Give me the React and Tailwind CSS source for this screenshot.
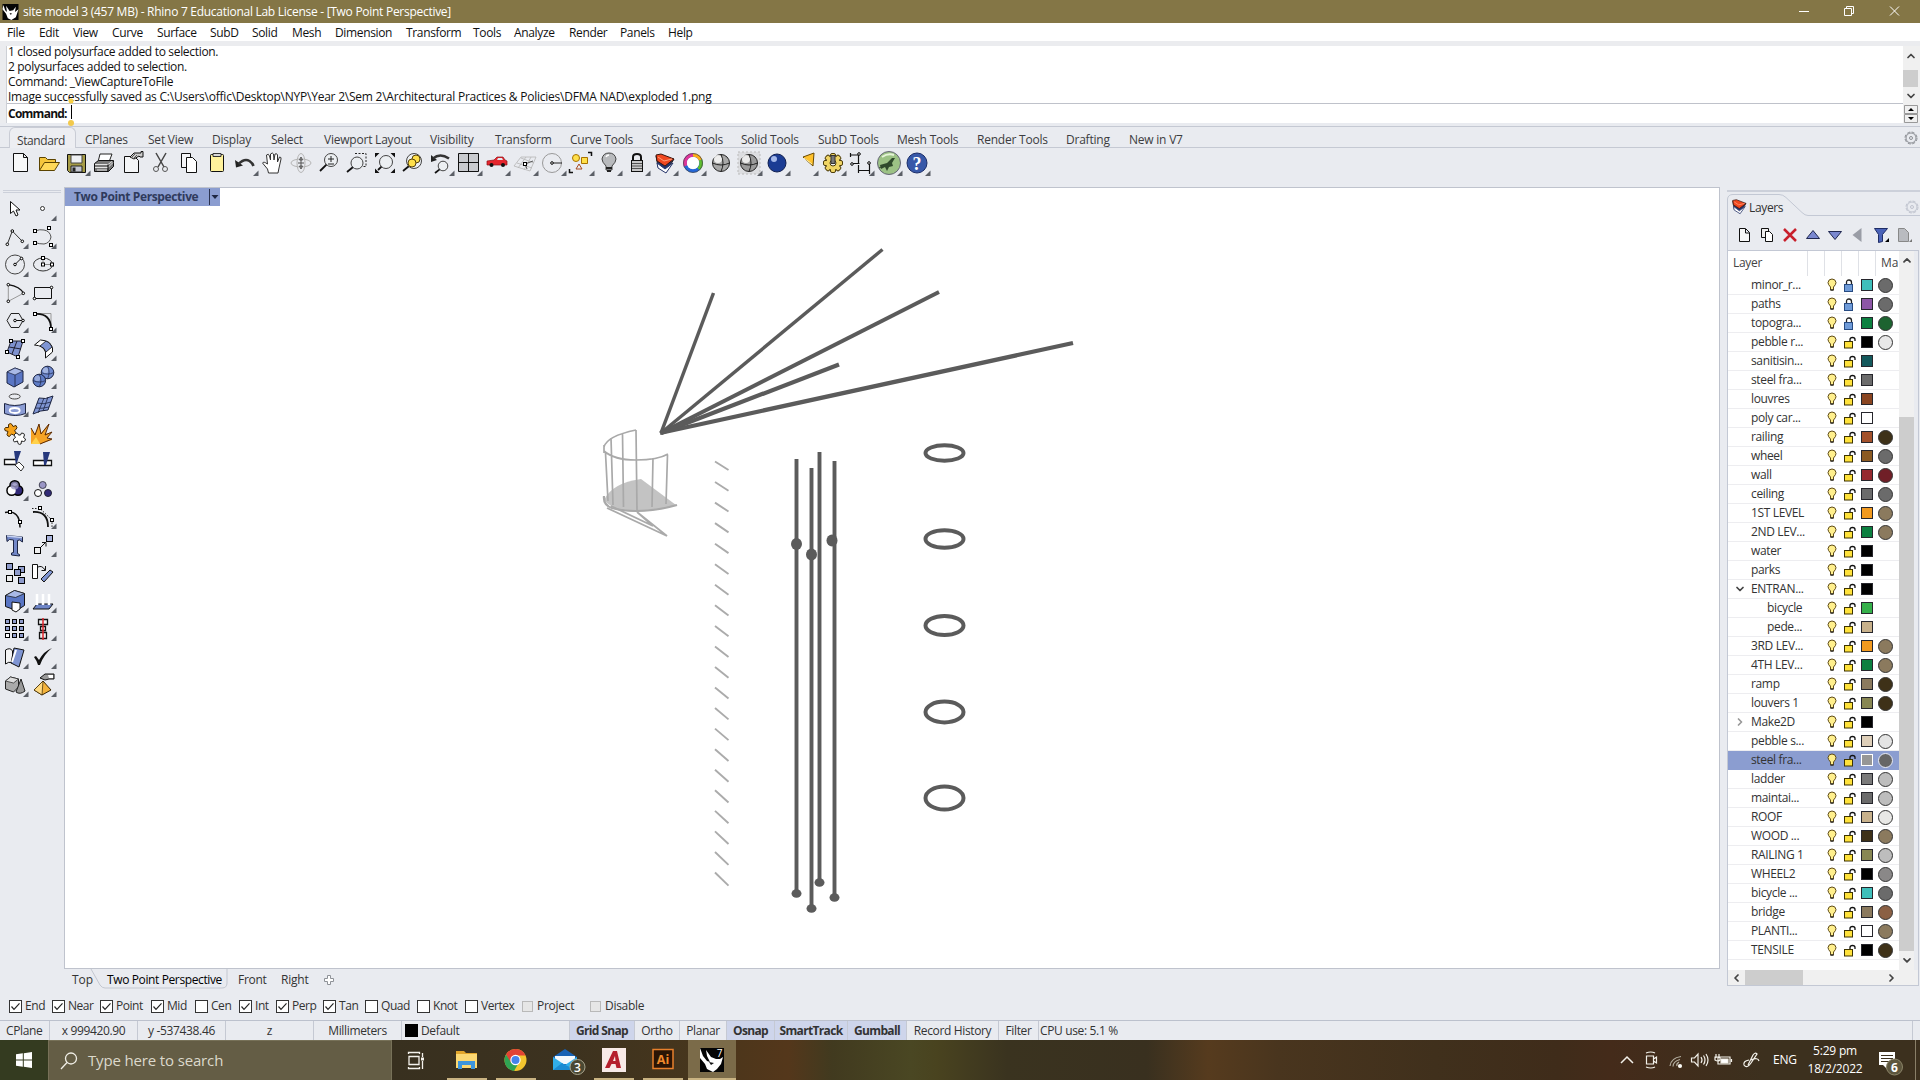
import React from 'react';
import { ChevronUp, ChevronDown, ChevronLeft, ChevronRight } from 'lucide-react';

const menus = [
  ['File', 'w-[32px]'], ['Edit', 'w-[34px]'], ['View', 'w-[39px]'], ['Curve', 'w-[45px]'], ['Surface', 'w-[53px]'],
  ['SubD', 'w-[42px]'], ['Solid', 'w-[40px]'], ['Mesh', 'w-[43px]'], ['Dimension', 'w-[71px]'], ['Transform', 'w-[67px]'],
  ['Tools', 'w-[41px]'], ['Analyze', 'w-[55px]'], ['Render', 'w-[51px]'], ['Panels', 'w-[48px]'], ['Help', 'w-[40px]'],
];

const toolTabs = [
  ['CPlanes', 'w-[63px]'], ['Set View', 'w-[64px]'], ['Display', 'w-[59px]'], ['Select', 'w-[53px]'],
  ['Viewport Layout', 'w-[106px]'], ['Visibility', 'w-[65px]'], ['Transform', 'w-[75px]'], ['Curve Tools', 'w-[81px]'],
  ['Surface Tools', 'w-[90px]'], ['Solid Tools', 'w-[77px]'], ['SubD Tools', 'w-[79px]'], ['Mesh Tools', 'w-[80px]'],
  ['Render Tools', 'w-[89px]'], ['Drafting', 'w-[63px]'], ['New in V7', 'w-[70px]'],
];

// name, lock state, layer colour, material colour, indent, arrow
const layers = [
  ['minor_r...', 'locked', '#3fbfbb', '#6b6b6b'],
  ['paths', 'locked', '#8d56a6', '#6b6b6b'],
  ['topogra...', 'locked', '#0c8040', '#1d6330'],
  ['pebble r...', 'open', '#000000', '#e8e8e8'],
  ['sanitisin...', 'open', '#14595c', null],
  ['steel fra...', 'open', '#6b6b6b', null],
  ['louvres', 'open', '#8a4521', null],
  ['poly car...', 'open', '#ffffff', null],
  ['railing', 'open', '#a3512b', '#3e3118'],
  ['wheel', 'open', '#8b5a22', '#6b6b6b'],
  ['wall', 'open', '#96292f', '#701f27'],
  ['ceiling', 'open', '#6b6b6b', '#6b6b6b'],
  ['1ST LEVEL', 'open', '#f29a1f', '#8b7a5e'],
  ['2ND LEV...', 'open', '#0c8040', '#8b7a5e'],
  ['water', 'open', '#000000', null],
  ['parks', 'open', '#000000', null],
  ['ENTRAN...', 'open', '#000000', null, false, 'down'],
  ['bicycle', 'open', '#35b04a', null, true],
  ['pede...', 'open', '#c8b18b', null, true],
  ['3RD LEV...', 'open', '#f29a1f', '#8b7a5e'],
  ['4TH LEV...', 'open', '#0c8040', '#8b7a5e'],
  ['ramp', 'open', '#8b7a5e', '#3e3118'],
  ['louvers 1', 'open', '#888753', '#3e3118'],
  ['Make2D', 'open', '#000000', null, false, 'right'],
  ['pebble s...', 'open', '#decfb9', '#e4e4e4'],
  ['steel fra...', 'open', '#969696', '#666666'],
  ['ladder', 'open', '#7a7a7a', '#bdbdbd'],
  ['maintai...', 'open', '#6b6b6b', '#bdbdbd'],
  ['ROOF', 'open', '#c8b18b', '#e8e8e6'],
  ['WOOD ...', 'open', '#3e3118', '#8b7a5e'],
  ['RAILING 1', 'open', '#888753', '#bdbdbd'],
  ['WHEEL2', 'open', '#000000', '#8a8888'],
  ['bicycle ...', 'open', '#3fbfbb', '#6b6b6b'],
  ['bridge', 'open', '#8b7a5e', '#8b6044'],
  ['PLANTI...', 'open', '#ffffff', '#8b7a5e'],
  ['TENSILE', 'open', '#000000', '#3e3118'],
];
const selectedLayer = 25;

const osnaps = [
  ['End', true, 'w-[43px]'], ['Near', true, 'w-[48px]'], ['Point', true, 'w-[51px]'], ['Mid', true, 'w-[44px]'],
  ['Cen', false, 'w-[44px]'], ['Int', true, 'w-[37px]'], ['Perp', true, 'w-[47px]'], ['Tan', true, 'w-[42px]'],
  ['Quad', false, 'w-[52px]'], ['Knot', false, 'w-[48px]'], ['Vertex', false, 'w-[57px]'],
];

const modes = [
  ['Grid Snap', true, 'w-[65px]'], ['Ortho', false, 'w-[45px]'], ['Planar', false, 'w-[47px]'], ['Osnap', true, 'w-[48px]'],
  ['SmartTrack', true, 'w-[73px]'], ['Gumball', true, 'w-[59px]'], ['Record History', false, 'w-[92px]'], ['Filter', false, 'w-[40px]'],
];

const Node = ({ x, y, s = 3, fill = '#fff' }) => (
  <rect x={x - s / 2} y={y - s / 2} width={s} height={s} fill={fill} stroke="#000" />
);

const Dot = ({ x, y }) => <circle cx={x} cy={y} r="1.3" fill="#fff" stroke="#000" />;

const Lens = ({ x = 15, y = 12, r = 6, hx = 5, hy = 22 }) => (
  <>
    <circle cx={x} cy={y} r={r} fill="#eef1f4" fillOpacity=".6" stroke="#444" />
    <path d={`M${x - r * 0.7} ${y + r * 0.7}L${hx} ${hy}`} stroke="#111" strokeWidth="1.8" />
  </>
);

const Sphere = ({ x, y, r, c = '#6f8ad0' }) => (
  <>
    <circle cx={x} cy={y} r={r} fill={c} stroke="#1c2442" />
    <circle cx={x - r * 0.3} cy={y - r * 0.35} r={r * 0.45} fill="#fff" opacity=".35" />
    <path d={`M${x - r} ${y}q${r} ${r * 0.5} ${r * 2} 0M${x} ${y - r}q${r * 0.5} ${r} 0 ${r * 2}`} stroke="#1c2442" strokeWidth=".7" />
  </>
);

const LayerStack = () => (
  <>
    <path d="M5 7l8 5 10-2-8 13-8-5z" fill="#23356e" stroke="#222" />
    <path d="M6 14l8 6 8-6-7 10-8-5z" fill="#fff" stroke="#26356b" />
    <path d="M5 6l5-1 13 5-9 7-8-5z" fill="#f0471f" stroke="#3a1610" />
    <path d="M7 8l6 4 8-2" stroke="#ff9d77" />
  </>
);

const topIcons = [
  { d: <path d="M6.500 4.500h10l4 4v14h-14zM16.500 4.500v4h4" fill="#f7f8f9" stroke="#111" /> },
  { d: <><path d="M4.500 21.500v-13h6l2 2h8v4" fill="#f5c63c" stroke="#5b4300" /><path d="M4.500 21.500l5-8h15l-5 8z" fill="#ffd959" stroke="#5b4300" /></> },
  { t: 1, d: <><path d="M4.500 5.500h18v18h-16l-2-2z" fill="#a59b46" stroke="#111" /><path d="M8 6h11v8H8z" fill="#eef0f3" stroke="#444" /><path d="M8 17h11v6H8z" fill="#c4c7d2" stroke="#222" /><path d="M9.500 18.500h3v4h-3z" fill="#222" /></> },
  { d: <><path d="M9 5h12l-3 8H7z" fill="#fff" stroke="#222" /><path d="M3.500 14.500l4-3h15v6l-5 5h-14z" fill="#777" stroke="#111" /><path d="M4 18.500h13l5-5M4 15.500h13l4-3M6 21h10" stroke="#fff" strokeWidth=".8" /><path d="M17 15.500v7" stroke="#000" /></> },
  { d: <><path d="M5.500 7.500h10l4 4v12h-14z" fill="#f4f5f7" stroke="#111" /><path d="M11 8l4-4h7V2.500h2V8h-3l-1-1-5 3z" fill="#ccc" stroke="#111" /><path d="M12 9l4-4M14 10l4-4" stroke="#555" /></> },
  { d: <><path d="M9 4l8 14M19 4l-8 14" stroke="#444" strokeWidth="1.500" /><circle cx="9" cy="20" r="2.500" stroke="#555" /><circle cx="18" cy="20" r="2.500" stroke="#555" /></> },
  { d: <><path d="M6.500 4.500h9v14h-9z" fill="#f4f5f7" stroke="#111" /><path d="M11.500 8.500h6l4 4v11h-10z" fill="#fff" stroke="#111" /></> },
  { d: <><rect x="7.500" y="5.500" width="13" height="17" rx="1" fill="#fff29c" stroke="#111" /><path d="M10 4.500h8v3h-8z" fill="#d8d8d8" stroke="#333" /></> },
  { t: 1, d: <><path d="M4 11l1 7.500 7-2z" fill="#222" /><path d="M7.500 15q6-6 11-3 3 2 4 5" stroke="#333" strokeWidth="2.600" /></> },
  { d: <path d="M9.500 24l-1-4-5-6q1-2 5 1l-1-9q2-2 3 1l1 4V5q2-2 3 0l.500 6 1-6q2-1 2.500 1v7l2-5q2 0 1.500 2l-2 9-1 5z" fill="#fff" stroke="#333" /> },
  { d: <><ellipse cx="14" cy="14" rx="10" ry="4" stroke="#b5b5b5" /><ellipse cx="14" cy="14" rx="4" ry="9.500" stroke="#b5b5b5" /><path d="M14 10v8M11 14h6M12.500 11l1.500-3 1.500 3zM12.500 17l1.500 3 1.500-3z" stroke="#555" /></> },
  { d: <><Lens x={16} y={11} r={6.500} hx={5} hy={22} /><path d="M13 10h6M16 7v6M13 15h6" stroke="#222" /></> },
  { d: <><Lens x={14} y={14} r={6} hx={4} hy={23} /><path d="M12 4.500h11v13H19" stroke="#222" strokeDasharray="2 1.500" /></> },
  { d: <><Lens x={15} y={13} r={6.500} hx={7} hy={21} /><path d="M4 4h4.500L4 8.500zM24 4h-4.500l4.500 4.500zM4 24h4.500L4 19.500zM24 24h-4.500l4.500-4.500z" fill="#111" /></> },
  { d: <><Lens x={15} y={12} r={7.500} hx={4} hy={22} /><circle cx="17" cy="10" r="4" fill="#ffe04a" stroke="#57430c" /><circle cx="13" cy="14" r="4" fill="#ffe04a" stroke="#57430c" /></> },
  { t: 1, d: <><Lens x={16} y={17} r={4.800} hx={8} hy={24} /><path d="M4 13V6l6 5z" fill="#222" /><path d="M6 9.500q7-6 16 0" stroke="#333" strokeWidth="2.500" /></> },
  { t: 1, d: <><path d="M3.500 4.500h20v18h-20z" fill="#c9cbcf" stroke="#111" /><path d="M13.500 4v19M3 13.500h21" stroke="#111" /></> },
  { t: 1, d: <><path d="M4 16v-4l7-1 3-3h6l2 3 2 1v4z" fill="#e6262e" stroke="#8d1015" strokeWidth=".7" /><path d="M15 9h4l1 2h-6z" fill="#dfe9ef" /><circle cx="8.500" cy="16" r="2" fill="#111" /><circle cx="20" cy="16" r="2" fill="#111" /></> },
  { t: 1, d: <><path d="M3 17l7-9h15l-6 14zM6 14l15 5M10 9l13 5M7 19l8-11M13 21l7-13" stroke="#b5b5b5" strokeWidth=".8" /><path d="M14 15l8-3M14 15l2 5" stroke="#555" /><Node x={14} y={15} /></> },
  { t: 1, d: <><circle cx="13" cy="14" r="9.500" stroke="#999" /><path d="M13 14h10" stroke="#222" /><Dot x={13} y={14} /></> },
  { t: 1, d: <><circle cx="9" cy="9" r="3.500" fill="#ffe04a" stroke="#a87200" /><path d="M14.500 8.500h6v6h-6z" fill="#ffe04a" stroke="#a87200" /><path d="M9 20l3-5 3 5z" stroke="#a84a20" /><path d="M21 3.500h3.500V7M2.500 20v3.500H6" stroke="#111" strokeWidth="1.500" /></> },
  { t: 1, d: <><path d="M11 17q-4-4-4-7 1-6 7-6t7 6q0 3-4 7v4h-6z" fill="#b8babd" stroke="#444" /><path d="M11 19h6M12 22h4" stroke="#222" strokeWidth="2" /><path d="M11 8q1-2 3-2" stroke="#fff" strokeWidth="1.500" /></> },
  { t: 1, d: <><path d="M10 12V8q0-3 4-3t4 3v4" stroke="#111" strokeWidth="2" /><rect x="8.500" y="11.500" width="11" height="11" fill="#c8c8c8" stroke="#111" /><path d="M9 14.500h10M9 17h10M9 19.500h10" stroke="#333" strokeWidth=".8" /></> },
  { t: 1, d: <LayerStack /> },
  { t: 1, d: <><circle cx="14" cy="14" r="8" stroke="#2367d8" strokeWidth="3.500" /><path d="M14 6a8 8 0 0 1 7.500 5" stroke="#ffae17" strokeWidth="3.500" /><path d="M21.500 11a8 8 0 0 1-2 9" stroke="#5fbf2f" strokeWidth="3.500" /><path d="M14 6a8 8 0 0 0-7.500 11" stroke="#e0359b" strokeWidth="3.500" /><circle cx="14" cy="14" r="9.500" stroke="#444" strokeWidth=".7" /><circle cx="14" cy="14" r="6" fill="#fff" /></> },
  { d: <><circle cx="14" cy="14" r="8.500" fill="#a8a8a8" stroke="#222" /><circle cx="11" cy="10" r="4" fill="#fff" opacity=".8" /><path d="M5.500 14q8.500 4 17 0M14 5.500q4 8.500 0 17" stroke="#222" /></> },
  { t: 1, d: <><path d="M3 3h22v22H3z" fill="#dcdde0" /><path d="M3 3h22v22H3z" stroke="#bbb" strokeDasharray="2 2" /><circle cx="14" cy="14" r="8.500" fill="#9b9b9b" stroke="#222" /><circle cx="11" cy="10" r="4" fill="#fff" opacity=".8" /><path d="M5.500 14q8.500 4 17 0M14 5.500q4 8.500 0 17" stroke="#222" /></> },
  { t: 1, d: <><circle cx="14" cy="14" r="9" fill="#1b3c94" stroke="#101f50" /><circle cx="11" cy="10" r="3" fill="#c8d8ff" opacity=".8" /></> },
  { t: 1, d: <><path d="M12 8l11-4-1 13z" fill="#ffc22e" stroke="#6a4a00" /><path d="M13 9l8 6" stroke="#fff3b0" /></> },
  {
    t: 1,
    d: (
      <>
        {[0, 45, 90, 135].map((a) => (
          <rect key={a} x="11.500" y="4.500" width="5" height="19" rx="1.500" transform={`rotate(${a} 14 14)`} fill="#f0d565" stroke="#4d3d0b" />
        ))}
        <circle cx="14" cy="14" r="6.800" fill="#f0d565" />
        <circle cx="14" cy="14" r="3" fill="#eef0f3" stroke="#4d3d0b" />
        <path d="M12 6.500h4v8h-4z" fill="#777" stroke="#333" />
      </>
    ),
  },
  { t: 1, d: <><path d="M3.500 4v4M3.500 6h8M4.500 14.500h8M11.500 6v8M11.500 16v8M22.500 14v11M12 21.500h10" stroke="#111" strokeWidth="1.200" /><Dot x={12} y={5} /><Dot x={5} y={15} /><Dot x={22} y={14} /></> },
  { t: 1, d: <><circle cx="14" cy="14" r="11.500" fill="#9cc285" stroke="#667" /><path d="M5 16l7-2 5-5 3 0-3 5 1 3-4 1-2 4-2-4-4 2z" fill="#2f4a2b" /><path d="M4 19l6-3" stroke="#2f4a2b" /><path d="M7 8q6-4 12-2" stroke="#e5f4d8" strokeWidth="2" /></> },
  { t: 1, d: <><circle cx="14" cy="14" r="10" fill="#3758a8" stroke="#1b2d68" /><text x="14" y="20.500" textAnchor="middle" fontSize="18" fontWeight="bold" fill="#fff" fontFamily="Liberation Serif, serif">?</text></> },
];

const Cube = () => (
  <>
    <path d="M6 10l8-4 8 3v11l-9 5-7-4z" fill="#5a76c4" stroke="#1c2442" />
    <path d="M6 10l8-4 8 3-8 4z" fill="#a9b9e6" stroke="#1c2442" strokeWidth=".7" />
    <path d="M14 13v12" stroke="#1c2442" strokeWidth=".8" />
  </>
);

const sideIcons = [
  { d: <path d="M9.500 7.500v12l3-2.500 2.500 5 2-1-2-5h4z" fill="#fff" stroke="#111" /> },
  { t: 1, d: <circle cx="13.500" cy="14.500" r="2" fill="#fff" stroke="#333" /> },
  { t: 1, d: <><path d="M6.300 22.300l5-13.300 10 10.300" stroke="#333" /><Dot x={6.300} y={22.300} /><Dot x={11.300} y={9} /><Dot x={21.300} y={19.300} /></> },
  { t: 1, d: <><path d="M6 9q5-2 9-1 6 1 7 7-1 6-7 7-5 0-9-1.500" stroke="#555" /><Node x={6} y={9} /><Node x={20} y={6} /><Node x={6} y={21} /><Node x={22} y={23} /></> },
  { t: 1, d: <><circle cx="14" cy="14.500" r="9.500" stroke="#444" /><path d="M14 14.500l6-6" stroke="#111" /><Dot x={14} y={14.500} /><Dot x={20.500} y={8.500} /></> },
  { t: 1, d: <><ellipse cx="14" cy="14.500" rx="9.500" ry="6.500" stroke="#333" /><path d="M14 8v6.500h9" stroke="#888" /><Node x={14} y={8} /><Node x={14} y={14.500} /><Node x={23} y={14.500} /></> },
  { t: 1, d: <><path d="M7.300 6.700v16.600l15-8" stroke="#999" /><path d="M7.300 6.700q12 2 15 8.600" stroke="#111" strokeWidth="1.300" /><Dot x={7.300} y={6.700} /><Dot x={7.300} y={23.300} /><Dot x={22.300} y={15.300} /></> },
  { t: 1, d: <><path d="M5.500 9.500h17v11h-17z" stroke="#111" /><Dot x={5.500} y={20.500} /><Dot x={22.500} y={9.500} /></> },
  { t: 1, d: <><path d="M6 14.500l4-7h8l4 7-4 7h-8z" stroke="#222" /><path d="M14 14.500h8" stroke="#111" /><Dot x={14} y={14.500} /><Dot x={22} y={14.500} /></> },
  { t: 1, d: <><path d="M6 7.500h16V23" stroke="#999" /><path d="M6 8q16-1 16 15" stroke="#111" strokeWidth="1.800" /><Node x={6} y={8} /><Node x={22} y={23} /></> },
  { t: 1, d: <><path d="M10 7h12l-5 16-11-5z" fill="#7f92cf" stroke="#223" /><path d="M16 7l-5 13M8 13l12 2" stroke="#223" /><Node x={10} y={7} /><Node x={22} y={7} /><Node x={17} y={23} /><Node x={6} y={18} /></> },
  { t: 1, d: <><path d="M5.500 11l6-5q10 .500 12 8v4l-7 6v-6q-2-6.500-11-7z" fill="#fff" stroke="#111" /><path d="M11 12l6-5q4 1 6 6l-6 5q-1-4-6-6z" fill="#7f95d3" stroke="#111" strokeWidth=".8" /></> },
  { t: 1, d: <Cube /> },
  { t: 1, d: <><Sphere x={18.500} y={10.500} r={6.300} /><Sphere x={10.300} y={18.500} r={6.300} c="#5f7cc6" /></> },
  { t: 1, d: <><ellipse cx="13.700" cy="6.500" rx="5.500" ry="2.500" stroke="#444" /><path d="M3.500 13.500q10 4 21 0v10q-10 4-21 0z" fill="#8b9cd4" stroke="#1c2442" /><ellipse cx="13.700" cy="20.500" rx="5" ry="2.500" stroke="#fff" strokeWidth="1.800" /></> },
  { t: 1, d: <><path d="M10 8q6 2 14-2l-5 14q-7 0-15 4z" fill="#7f95d3" stroke="#1c2442" /><path d="M15 8l-6 15M19 7l-5 14M8 13q7 2 14-1M6 18q7 1 14-1" stroke="#1c2442" strokeWidth=".8" /></> },
  { d: <><path d="M4.500 9.500h3l0-3q2-2 3.500 0l1 2 3-1q2 2 0 4l-1.500 1 2 3q-1 2-3 1.500l-2-1-2 2.500q-2 0-2.500-2l1-3-3-1q-1-2 .500-3z" fill="#f5a21b" stroke="#4a2c00" /><path d="M13 17l2-2q2 0 2.500 2l2 0 1-2q3 0 3 2l-1 2.500 2 1.500q0 2.500-2 2.500l-2-.500-.500 3q-2 1-3-.500l-.500-2.500-3 1q-1.500-1-1-3l2-1.500z" fill="#fff" stroke="#222" /></> },
  { d: <><path d="M2 26V10l4 6 4-10 2 9 8-9-4 10 7-2-5 6 5 2-12 4z" fill="#f6a324" /><path d="M2 10l4 7 4-11 2 10 8-10-4 11 7-3-5 6 5 1-12 5" stroke="#5b2a05" /><path d="M2 26l5-7 4 7z" fill="#ffd24a" /></> },
  { d: <><path d="M3.500 13.500h12v5h-12z" fill="#fff" stroke="#111" strokeWidth="1.300" /><path d="M13 5h7l-5 14z" fill="#26387c" /><path d="M14 19l4-3 5 5-3 4z" fill="#fff" stroke="#333" /></> },
  { d: <><path d="M4.500 14.500h18v5h-18z" fill="#fff" stroke="#111" strokeWidth="1.300" /><path d="M14 6h7l-4 13h-2z" fill="#26387c" /></> },
  { t: 1, d: <><g stroke="#000" strokeWidth="3"><circle cx="13.700" cy="11.500" r="4" /><circle cx="10.700" cy="16.500" r="4" /><circle cx="17" cy="16.500" r="4" /></g><circle cx="17" cy="16.500" r="4" fill="#322a78" /><circle cx="10.700" cy="16.500" r="4" fill="#fff" /><circle cx="13.700" cy="11.500" r="4" fill="#9a96c6" fillOpacity=".8" /></> },
  { d: <><circle cx="13.700" cy="11" r="3.500" fill="#9a96c6" stroke="#445" /><circle cx="9" cy="19" r="3.500" fill="#fff" stroke="#111" /><circle cx="19" cy="19" r="3.500" fill="#322a78" stroke="#223" /></> },
  { d: <><path d="M4 10.500q15-3 15 15" stroke="#111" strokeWidth="1.500" /><Node x={9} y={10} /><Node x={19} y={20} /></> },
  { t: 1, d: <><path d="M4 10q15-1 15 15" stroke="#111" strokeWidth="1.800" /><path d="M3 6.500h8L23 18v8" stroke="#222" strokeDasharray="1.500 1.500" /><Node x={11} y={6} /><Node x={23} y={18} /></> },
  { d: <><path d="M5.500 5.500l16 1.500v5l-3-2-2 .500v13l2 1v1.500l-8-1V23l2-.500V10l-4-.500-2.500 2z" fill="#7388c8" stroke="#1c2442" /><path d="M6 6l15 1.500" stroke="#c8d3f2" strokeWidth="1.500" /></> },
  { t: 1, d: <><Node x={8.500} y={20.500} s={6} fill="#eee" /><Node x={20.500} y={8.500} s={6} fill="#a9b4dc" /><path d="M12 17l4.500-4.500M13 12.500h4v4" stroke="#111" /></> },
  { d: <><Node x={8.500} y={8.500} s={6} fill="#8e9bcb" /><Node x={8.500} y={20.500} s={6} fill="#eee" /><Node x={20.500} y={11.500} s={6} fill="#8e9bcb" /><Node x={16.500} y={14.500} s={6} fill="#8e9bcb" /><Node x={20.500} y={22.500} s={6} fill="#8e9bcb" /></> },
  { d: <><path d="M3.500 6.500h5v14h-5z" fill="#fff" stroke="#111" /><path d="M9 9q4-2 7 3M16.500 8v4.500h-4" stroke="#111" /><path d="M12 21l9-9 3 2-9 10z" fill="#7f95d3" stroke="#111" /></> },
  { t: 1, d: <><path d="M4.500 9.500l9-5 10 3v12l-8 5-11-4z" fill="#5a76c4" stroke="#111" /><path d="M4.500 9.500l9-5 10 3-9 4z" fill="#a9b9e6" stroke="#111" strokeWidth=".7" /><path d="M11 16l8 1v6l-4 3-4-2z" fill="#fff" stroke="#111" /></> },
  { t: 1, d: <><path d="M4 23l4-5h16l-4 5z" fill="#6f86c8" stroke="#111" /><path d="M8 8v11M14 8v11M20 8v11" stroke="#fff" strokeWidth="2.500" /></> },
  { t: 1, d: <>{[7.500, 14.500, 21.500].map((y) => [6.500, 13.500, 20.500].map((x) => <Node key={`${x}-${y}`} x={x} y={y} s={4} fill={x < 8 && y > 20 ? '#fff' : '#8e9bcb'} />))}</> },
  { t: 1, d: <><path d="M9.500 5.500h9v5h-9zM11.500 12.500h5v4h-5zM10.500 18.500h7v6h-7z" fill="#eee" stroke="#111" strokeWidth="1.300" /><path d="M14 4v22" stroke="#e2262d" strokeWidth="1.500" /></> },
  { t: 1, d: <><path d="M4.500 8q5-3 7 1v12q-4-2-7 1z" fill="#f4f4f4" stroke="#111" /><path d="M13 6l10 2-5 17-8-4z" fill="#7f95d3" stroke="#111" /><path d="M15 8l-4 12" stroke="#fff" strokeWidth="2" /></> },
  { t: 1, d: <path d="M5 15l2-1 3 4Q15 9 23 6 15 12 11 23H9q-1-4-4-8z" fill="#111" /> },
  { t: 1, d: <><path d="M4.500 11l5-4 8 2v8l-5 5-8-3z" fill="#aaa" stroke="#222" /><path d="M4.500 11l5-4 8 2-5 4z" fill="#ddd" stroke="#222" strokeWidth=".7" /><path d="M20 9l-5 13q4 3 9-1z" fill="#999" stroke="#222" /></> },
  { t: 1, d: <><path d="M5 20l9-9 8 9-9 5z" fill="#f3b33c" stroke="#3a2500" /><path d="M14 11l-1 14-8-5z" fill="#ffd980" stroke="#3a2500" strokeWidth=".7" /><path d="M11 8l5-4h9v5h-5l-4 1z" fill="#999" stroke="#111" /><path d="M19 5h5v3h-4z" fill="#fff" /></> },
];

function ToolIcon({ icon }) {
  return (
    <svg viewBox="0 0 28 28" fill="none" className="w-7 h-7 shrink-0">
      {icon.d}
      {icon.t && <path d="M27.500 21.500v5.500H22z" fill="#5b5f66" />}
    </svg>
  );
}

function Gear({ color = '#8c8f95' }) {
  return (
    <svg viewBox="0 0 14 14" fill="none" stroke={color} className="w-3.5 h-3.5 shrink-0">
      <circle cx="7" cy="7" r="6" strokeDasharray="3.200 1.500" />
      <circle cx="7" cy="7" r="5" />
      <circle cx="7" cy="7" r="1.500" />
    </svg>
  );
}

function RhinoMark({ className }) {
  return (
    <svg viewBox="0 0 18 18" className={className}>
      <path d="M0 0h18v18H0z" fill="#050505" />
      <path d="M1 1l2 6 2 2-1-7 4 6 4-1 3-4-1 6 4-3-3 9-5 3-4-2-2-5-4-5z" fill="#fff" />
      <path d="M8 10l3 1-2 1z" fill="#000" />
    </svg>
  );
}

function Titlebar() {
  return (
    <div className="h-[23px] shrink-0 bg-[#847646] flex items-center text-white">
      <RhinoMark className="w-[17px] h-[16px] ml-[2px]" />
      <span className="ml-1 flex-1 pt-px tracking-[-0.28px]">site model 3 (457 MB) - Rhino 7 Educational Lab License - [Two Point Perspective]</span>
      <svg viewBox="0 0 120 22" fill="none" stroke="#fff" className="w-[120px] h-[22px] mr-[10px]">
        <path d="M9 10.500h10M54.500 7.500h7v7h-7zM56.500 7.500v-2h7v7h-2M100 5.500l9 9M109 5.500l-9 9" />
      </svg>
    </div>
  );
}

function CommandArea() {
  return (
    <div className="h-[82px] shrink-0 pt-[5px] pl-[6px] bg-[#ebecef] flex">
      <div className="flex-1 flex flex-col bg-white h-[77px] border-l border-[#cdd0d6]">
        <div className="h-[58px] pl-px flex flex-col justify-end leading-[15px] border-b border-[#bfc2ca] tracking-[-0.32px]">
          <span>1 closed polysurface added to selection.</span>
          <span>2 polysurfaces added to selection.</span>
          <span>Command: _ViewCaptureToFile</span>
          <span className="-mb-px tracking-[-0.23px]">Image successfully saved as C:\Users\offic\Desktop\NYP\Year 2\Sem 2\Architectural Practices &amp; Policies\DFMA NAD\exploded 1.png</span>
        </div>
        <div className="flex-1 flex items-center pl-px relative">
          <span className="font-bold tracking-[-0.75px]">Command:</span>
          <svg viewBox="0 0 10 28" className="absolute left-[59px] -top-[6px] w-[10px] h-[28px]">
            <path d="M5.500 7v14" stroke="#000" />
            <circle cx="5" cy="3" r="2.500" fill="#f7cf45" />
            <circle cx="5" cy="25" r="3" fill="#f2c94c" />
          </svg>
        </div>
      </div>
      <div className="w-[17px] h-[77px] flex flex-col items-center bg-[#f0f0f0] pr-[2px]">
        <ChevronUp className="h-[20px] w-[12px] text-[#444]" strokeWidth={3.5} />
        <div className="h-[17px] w-[15px] mt-[4px] bg-[#cdcdcd]" />
        <ChevronDown className="h-[18px] w-[12px] text-[#444]" strokeWidth={3.5} />
        <svg viewBox="0 0 14 18" className="w-[14px] h-[18px]">
          <path d="M.5.500h13v8H.500zM.500 9.500h13v8H.500z" fill="#f0f0f0" stroke="#999" />
          <path d="M4 6l3-3 3 3zM4 12l3 3 3-3z" fill="#000" />
        </svg>
      </div>
    </div>
  );
}

function TopToolbar() {
  return (
    <div className="h-[64px] shrink-0 flex flex-col text-[#3c3c40]">
      <div className="h-[25px] flex pt-[3px]">
        <div className="w-full h-[22px] flex border-t border-b border-[#c5c9d3] pl-[9px]">
          <div className="w-[67px] h-[21px] pl-[7px] flex items-center bg-[#edeef2] border-x border-t rounded-t-md border-[#c9ccd5] tracking-[-0.4px] mr-[9px] pt-[5px] shrink-0">Standard</div>
          {toolTabs.map(([name, w]) => (
            <div key={name} className={`${w} shrink-0 flex items-center pt-[6px] whitespace-nowrap tracking-[-0.22px]`}>{name}</div>
          ))}
          <div className="ml-auto mr-[2px] flex items-center pt-[2px]"><Gear /></div>
        </div>
      </div>
      <div className="flex pl-[7px] pt-px">
        {topIcons.map((icon, i) => <ToolIcon key={i} icon={icon} />)}
      </div>
    </div>
  );
}

function Viewport() {
  const rungs = Array.from({ length: 21 }, (_, i) => i);
  return (
    <div className="w-[1656px] h-[782px] shrink-0 bg-white border border-[#bfc3cd] flex relative">
      <svg viewBox="65 188 1654 780" fill="none" className="w-[1654px] h-[780px]">
        <g stroke="#5b5b5b">
          <path d="M661 433l52.500-140" strokeWidth="3.500" />
          <path d="M661 433l221.500-183.500" strokeWidth="3.400" />
          <path d="M661 433l278-141" strokeWidth="3.900" />
          <path d="M661 433l178-68.500" strokeWidth="4.200" />
          <path d="M660 433l413-90" strokeWidth="4.200" />
        </g>
        <path d="M604 500q8-17 37-21l35 26q-6 4-40 7-23-1-32-12z" fill="#c3c3c3" />
        <path d="M604 496q-1 9 8 12 10 3 24 3 20 0 41-6" stroke="#a9a9a9" strokeWidth="2.200" />
        <path d="M604 447q3-11 32-17M604 451q10 9 32 9t32-6M604 445v8M605.500 453l2.500 48M611 438l2 67M622.500 433l1 74M636 430l1 80M653 458l-1 49M667.500 455l-1.500 49" stroke="#a9a9a9" strokeWidth="1.700" />
        <path d="M607 508l60 28-30-24 16 14-42-20" stroke="#aaa" strokeWidth="1.800" />
        <g stroke="#ababab" strokeWidth="1.900">
          {rungs.map((i) => (
            <path key={i} d={`M715 ${461.5 + i * 20.55}l13.500 ${8.5 + i * 0.23}`} />
          ))}
        </g>
        <path d="M796.500 459v434M811.500 468v440M819.500 452v430M834.500 461v436" stroke="#5b5b5b" strokeWidth="3.900" />
        <g fill="#5b5b5b">
          <ellipse cx="796.500" cy="544" rx="5.500" ry="6" />
          <ellipse cx="811.500" cy="554.500" rx="5.500" ry="6" />
          <ellipse cx="832" cy="540.500" rx="5.500" ry="6" />
          <ellipse cx="796.500" cy="893.500" rx="5" ry="4.300" />
          <ellipse cx="811.500" cy="908.500" rx="5" ry="4.300" />
          <ellipse cx="819.500" cy="882.500" rx="5" ry="4.300" />
          <ellipse cx="834.500" cy="897.500" rx="5" ry="4.300" />
        </g>
        <g stroke="#5b5b5b" strokeWidth="4">
          <ellipse cx="944.500" cy="453" rx="19" ry="7.800" />
          <ellipse cx="944.500" cy="539" rx="19" ry="8.800" />
          <ellipse cx="944.500" cy="625.500" rx="19" ry="9.600" />
          <ellipse cx="944.500" cy="712" rx="19" ry="10.400" />
          <ellipse cx="944.500" cy="798" rx="19" ry="11.500" />
        </g>
      </svg>
      <div className="absolute left-0 top-0 w-[155px] h-[18px] bg-[#8b9dd0] flex items-center text-[#2f3a5c]">
        <span className="pl-[9px] font-bold w-[144px] tracking-[-0.38px]">Two Point Perspective</span>
        <svg viewBox="0 0 11 18" className="w-[11px] h-[18px]">
          <path d="M.5 1v16" stroke="#2b3350" />
          <path d="M2.500 7h7L6 11z" fill="#1f2742" />
        </svg>
      </div>
    </div>
  );
}

function Bulb() {
  return (
    <svg viewBox="0 0 10 14" fill="none" className="w-[10px] h-[14px] shrink-0">
      <path d="M3.500 9Q1 6.500 1 4.500 1.500 1 5 1t4 3.500Q9 6.500 6.500 9v3h-3z" fill="#ffef8c" stroke="#5e4a16" />
      <path d="M3.500 12h3" stroke="#333" strokeWidth="1.500" />
    </svg>
  );
}

function Lock({ open }) {
  return open ? (
    <svg viewBox="0 0 13 13" fill="none" className="w-[13px] h-[13px] shrink-0">
      <path d="M7 5.500V3.500Q7 1.500 9.500 1.500T12 3.500V5" stroke="#111" strokeWidth="1.300" />
      <rect x="1.500" y="5.500" width="8" height="6.500" fill="#ffe23b" stroke="#3d3300" />
    </svg>
  ) : (
    <svg viewBox="0 0 13 13" fill="none" className="w-[13px] h-[13px] shrink-0">
      <path d="M3.500 6V3.500q0-2.500 2.500-2.500t2.500 2.500V6" stroke="#222" strokeWidth="1.300" />
      <rect x="1.500" y="5.500" width="8" height="7" fill="#6f9bd8" stroke="#274b82" />
    </svg>
  );
}

function LayerRow({ row, selected }) {
  const [name, state, color, mat, indent, arrow] = row;
  return (
    <div className={`h-[19px] shrink-0 flex items-center border-b ${selected ? 'bg-[#8b9dd0] border-[#8b9dd0]' : 'border-[#ededf0]'}`}>
      <div className="w-[23px] flex justify-center">
        {arrow === 'down' && <ChevronDown className="w-[12px] h-[12px] text-[#444]" strokeWidth={3.5} />}
        {arrow === 'right' && <ChevronRight className="w-[12px] h-[12px] text-[#999]" strokeWidth={3.5} />}
      </div>
      <span className={`${indent ? 'pl-[16px]' : ''} w-[76px] whitespace-nowrap tracking-[-0.35px] text-[#333]`}>{name}</span>
      <Bulb />
      <div className="ml-[6px]"><Lock open={state === 'open'} /></div>
      <div className={`ml-[5px] w-3 h-3 shrink-0 border ${selected ? 'border-white' : 'border-[#26262c]'}`} style={{ backgroundColor: color }} />
      {mat && (
        <div className={`ml-[5px] w-[15px] h-[15px] shrink-0 rounded-full border ${selected ? 'border-[#e8ecf8]' : 'border-[#333]'}`} style={{ backgroundColor: mat }} />
      )}
    </div>
  );
}

function LayersPanel() {
  return (
    <div className="w-[193px] shrink-0 flex flex-col pt-[3px]">
      <div className="h-[3px] border-y border-[#ccd0da]" />
      <div className="h-[23px] mt-[2px] flex relative">
        <svg viewBox="0 0 193 23" fill="none" className="w-[193px] h-[23px]">
          <path d="M.5 23V5Q1 .5 6 .5h46q4 0 7 3l16 15q3 3 6 3h112" fill="none" stroke="#c3c8d4" />
          <g transform="translate(2 2) scale(.74)"><LayerStack /></g>
        </svg>
        <span className="absolute left-[22px] top-[6px] text-[#333] leading-4 tracking-[-0.35px]">Layers</span>
        <div className="absolute left-[178px] top-[6px]"><Gear color="#c0c4cf" /></div>
      </div>
      <div className="h-[770px] border-l border-b border-[#c3c8d4] flex flex-col mr-px border-r">
        <svg viewBox="0 0 191 33" fill="none" className="w-[191px] h-[33px] shrink-0 bg-[#e9ebf0]">
          <path d="M11.500 11.500h6l4 4v9h-10zM17.500 12v4h4" fill="#f7f7f7" stroke="#111" />
          <path d="M33.500 11.500h7v9h-7z" fill="#eee" stroke="#111" /><path d="M37.500 14.500h4l3 3v7h-7z" fill="#fff" stroke="#111" />
          <path d="M56 12l12 12M68 12l-12 12" stroke="#c8202c" strokeWidth="2.500" />
          <path d="M78.500 21.500h13l-6.500-8z" fill="#7a88d0" stroke="#1f2750" />
          <path d="M100.500 14.500h13l-6.500 8z" fill="#7a88d0" stroke="#1f2750" />
          <path d="M133.500 11v14l-9-7z" fill="#9a9da6" />
          <path d="M146.500 11.500h13l-5 6v7l-4 1v-8z" fill="#4a62b8" stroke="#1f2d66" /><path d="M161 21v4h-4z" fill="#000" />
          <path d="M170.500 11.500h6l4 4v9h-10z" fill="#b9bbc0" stroke="#888" /><path d="M184 22v3h-3z" fill="#777" />
        </svg>
        <div className="flex h-[720px] bg-white border-t border-[#c3c8d4]">
          <div className="w-[172px] overflow-hidden flex flex-col">
            <div className="h-[25px] shrink-0 flex items-center text-[#444]">
              <div className="w-[80px] h-full pl-[5px] pt-[3px] tracking-[-0.3px] border-r border-[#dfe1e6]">Layer</div>
              <div className="w-[17px] h-full border-r border-[#dfe1e6]" />
              <div className="w-[17px] h-full border-r border-[#dfe1e6]" />
              <div className="w-[17px] h-full border-r border-[#dfe1e6]" />
              <div className="w-[17px] h-full border-r border-[#dfe1e6]" />
              <div className="pl-[5px] pt-[3px] h-full">Ma</div>
            </div>
            {layers.map((row, i) => <LayerRow key={i} row={row} selected={i === selectedLayer} />)}
          </div>
          <div className="w-[15px] bg-[#f0f0f0] flex flex-col items-center">
            <ChevronUp className="w-[12px] h-[19px] text-[#444]" strokeWidth={3.5} />
            <div className="w-[15px] h-[535px] bg-[#cdcdcd] mt-[147px]" />
            <ChevronDown className="w-[12px] h-[19px] text-[#444]" strokeWidth={3.5} />
          </div>
          <div className="w-[4px] bg-[#e9ebf0]" />
        </div>
        <div className="h-[15px] flex items-center bg-[#f0f0f0]">
          <ChevronLeft className="w-[17px] h-[12px] text-[#444]" strokeWidth={3.5} />
          <div className="w-[58px] h-[15px] bg-[#cdcdcd]" />
          <ChevronRight className="w-[17px] h-[12px] ml-[80px] text-[#444]" strokeWidth={3.5} />
        </div>
      </div>
    </div>
  );
}

function Check({ on, dim }) {
  return (
    <svg viewBox="0 0 13 13" fill="none" className="w-[13px] h-[13px] shrink-0">
      <rect x=".5" y={dim ? 1.5 : 0.5} width={dim ? 10 : 12} height={dim ? 10 : 12} fill={dim ? '#e6e6e6' : '#fff'} stroke={dim ? '#b9b9b9' : '#333'} />
      {on && <path d="M2.500 6.500l2.500 2.800 5.500-6" stroke="#222" strokeWidth="1.200" />}
    </svg>
  );
}

function BottomBars() {
  return (
    <div className="flex-1 flex flex-col text-[#333]">
      <div className="h-[24px] flex pl-[64px] relative">
        <svg viewBox="0 0 164 20" fill="none" className="absolute w-[164px] h-[20px]">
          <path d="M27 0l9 16q2 3 5 3h117q5 0 5-5V0" stroke="#c3c7d0" />
        </svg>
        <div className="w-[43px] pl-[8px] pt-[2px] text-[#333]">Top</div>
        <div className="w-[131px] pt-[2px] tracking-[-0.38px] whitespace-nowrap text-black">Two Point Perspective</div>
        <div className="w-[43px] pt-[2px] tracking-[-0.3px]">Front</div>
        <div className="w-[43px] pt-[2px] tracking-[-0.2px]">Right</div>
        <svg viewBox="0 0 10 10" fill="none" className="w-[10px] h-[10px] mt-[6px]">
          <path d="M3.500.5h3v3h3v3h-3v3h-3v-3h-3v-3h3z" fill="#fff" stroke="#8f9298" />
        </svg>
      </div>
      <div className="h-[26px] flex items-center pl-[9px] mb-px">
        {osnaps.map(([name, on, w]) => (
          <div key={name} className={`${w} shrink-0 flex items-center gap-[3px] tracking-[-0.45px]`}>
            <Check on={on} />
            <span>{name}</span>
          </div>
        ))}
        <div className="w-[68px] flex items-center gap-[2px] tracking-[-0.25px]"><Check dim /><span>Project</span></div>
        <div className="flex items-center gap-[2px] tracking-[-0.3px]"><Check dim /><span>Disable</span></div>
      </div>
      <div className="h-[20px] border-t border-[#bcc1cd] flex items-stretch leading-[20px] tracking-[-0.35px] whitespace-nowrap">
        <div className="w-[50px] pl-[6px] border-r border-[#c5c9d3]">CPlane</div>
        <div className="w-[88px] text-center border-r border-[#c5c9d3]">x 999420.90</div>
        <div className="w-[88px] text-center border-r border-[#c5c9d3]">y -537438.46</div>
        <div className="w-[88px] text-center border-r border-[#c5c9d3]">z</div>
        <div className="w-[88px] text-center border-r border-[#c5c9d3]">Millimeters</div>
        <div className="w-[167px] pl-[3px] flex items-center gap-[3px]">
          <div className="w-[13px] h-[13px] bg-black" />
          <span>Default</span>
        </div>
        {modes.map(([name, on, w]) => (
          <div key={name} className={`${w} text-center border-l border-[#c5c9d3] ${on ? 'bg-[#ced5eb] font-bold tracking-[-0.65px]' : ''}`}>{name}</div>
        ))}
        <div className="border-l border-[#c5c9d3] pl-px flex-1 mr-[7px] border-r">CPU use: 5.1 %</div>
      </div>
    </div>
  );
}

function Taskbar() {
  return (
    <div className="h-[40px] shrink-0 flex text-white">
      <div className="w-[48px] bg-[#343b20] flex items-center justify-center">
        <svg viewBox="0 0 16 16" className="w-4 h-4" fill="#fff">
          <path d="M0 2.300L6.800 1.300v6.200H0zM7.800 1.200L16 0v7.500H7.800zM0 8.500h6.800v6.200L0 13.700zM7.800 8.500H16V16l-8.200-1.200z" />
        </svg>
      </div>
      <div className="w-[344px] bg-[#645d45] border border-[#777158] border-b-0 flex items-center">
        <svg viewBox="0 0 18 18" fill="none" stroke="#f0eee6" strokeWidth="1.300" className="w-[18px] h-[18px] ml-[11px]">
          <circle cx="11" cy="6.500" r="5.500" />
          <path d="M7 10.500L1 17" />
        </svg>
        <span className="ml-[10px] -mt-px text-[15px] text-[#dcd9cc] tracking-[-0.15px]">Type here to search</span>
      </div>
      <svg viewBox="392 0 344 40" fill="none" className="w-[344px] h-[40px] bg-[linear-gradient(90deg,#38301f_0%,#3c321f_50%,#4a371c_100%)]">
        <path d="M688 0h48v40h-48z" fill="#7b6b49" />
        <g stroke="#f4f2ec" strokeWidth="1.300">
          <path d="M409 16.500h10v8h-10zM408.500 14v-1.500h11V14M408.500 27v1.500h11V27M422.500 13v4M422.500 21v8" />
          <path d="M421 19h3" strokeWidth="3" />
        </g>
        <path d="M456 11h8l2 2h11v4h-21z" fill="#e2a62c" />
        <path d="M456 14h21v14h-21z" fill="#fbd873" />
        <path d="M458 29v-8h17v8h-4v-4h-9v4z" fill="#3c95dd" />
        <circle cx="515.500" cy="20" r="11" fill="#f3c52e" />
        <path d="M506 14.500A11 11 0 0 1 525.500 15.500H515L510 23z" fill="#e24334" />
        <path d="M506 14.500A11 11 0 0 0 514 31l5-8.500-8 0z" fill="#2fa353" />
        <circle cx="515.500" cy="20" r="5.200" fill="#fff" />
        <circle cx="515.500" cy="20" r="4" fill="#4583ec" />
        <path d="M553 17l12-8 12 8v13h-24z" fill="#1762b5" />
        <path d="M555 16h20v8h-20z" fill="#f4f8fc" />
        <path d="M553 17l12 8 12-8v13h-24z" fill="#31aeea" />
        <path d="M553 30l9-7 3 2 12 5z" fill="#1b8bd3" />
        <circle cx="577.500" cy="27" r="7.500" fill="#4b4832" stroke="#a9a58e" />
        <text x="577.500" y="31.500" fontSize="12" fontWeight="600" textAnchor="middle" fill="#fff">3</text>
        <path d="M602 8h24v24h-24z" fill="#f8eae7" />
        <path d="M605 28l8-17h4l4 17h-4.500l-1-4h-4l-2 4zM613 21h2.500l-.500-5z" fill="#b51f2c" />
        <path d="M653 9.500h20v19h-20z" fill="#2a1405" stroke="#e8802c" strokeWidth="1.500" />
        <text x="663" y="23.500" fontSize="12.500" fontWeight="bold" textAnchor="middle" fill="#f08a2c">Ai</text>
        <path d="M700 8h24v24h-24z" fill="#050505" />
        <path d="M700 8l3 8 4 5 3 1-3-6-1-6 5 7 5 2 4 0 3-2-2 7-4 5-4 3-6-3-2-5-5-6z" fill="#fff" />
        <path d="M709 22l5 1-3 2z" fill="#111" />
        <text x="719.500" y="17" fontSize="10" textAnchor="middle" fill="#fff">7</text>
        <path d="M447 38h40v2h-40zM496 38h40v2h-40zM594 38h40v2h-40zM643 38h40v2h-40zM688 38h48v2h-48z" fill="#c9b382" />
      </svg>
      <div className="flex-1 bg-[linear-gradient(90deg,#4d361b_0%,#54371b_6%,#413a1f_11%,#4a4723_20%,#49431f_23%,#3a331f_31%,#39301f_47%,#563b1e_54%,#49351e_62%,#40301c_80%,#3f2c1a_94%,#442b1a_100%)]" />
      <svg viewBox="1610 0 155 40" fill="none" stroke="#f3f1ea" strokeWidth="1.200" className="w-[155px] h-[40px] bg-[linear-gradient(90deg,#442b1a,#3c301e)]">
        <path d="M1621 23l6-6 6 6" strokeWidth="1.500" />
        <path d="M1646.500 16h7v8h-7zM1653.500 19l3-2v6l-3-2M1646 13q5-2 9 0M1646 27q5 2 9 0" />
        <path d="M1677 26q-1-2 2-4M1673 26.500q0-5 7-7M1670 26q1-8 11-9.500" stroke="#b5b0a2" />
        <circle cx="1680" cy="26" r="1.500" fill="#fff" />
        <path d="M1691.500 18h3l3.500-4v12l-3.500-4h-3zM1701 17q2 3 0 6M1703.500 15.500q3 4.500 0 9M1706 14q4 6 0 12" />
        <path d="M1718 17h12v7h-12zM1731.500 19v3M1716 14v4M1719 14v4M1715 17h5v3q-2 2-5 0z" />
        <path d="M1721 19h7v4h-7z" fill="#fff" />
        <path d="M1749 20q-6 1-5 5 3 4 7-2l6-9q-2-2-4 1l-5 10M1751 20q7-3 8 1" />
      </svg>
      <div className="w-[155px] bg-[#3c301e] flex items-center">
        <span className="ml-[8px] w-[32px] tracking-[-0.2px]">ENG</span>
        <div className="w-[60px] text-center leading-[18px] tracking-[-0.2px]">5:29 pm<br />18/2/2022</div>
        <svg viewBox="0 0 50 40" fill="none" className="w-[50px] h-[40px] ml-[5px]">
          <path d="M9 12h16v13h-8v4l-4-4H9z" fill="#fff" />
          <path d="M11 15.500h12M11 18.500h12M11 21.500h8" stroke="#3c301e" />
          <circle cx="24.500" cy="27" r="8" fill="#5d563e" stroke="#8b8468" />
          <text x="24.500" y="31.500" fontSize="12" fontWeight="bold" textAnchor="middle" fill="#fff">6</text>
          <path d="M45.500 0v40" stroke="#897f68" />
        </svg>
      </div>
    </div>
  );
}

export default function App() {
  return (
    <div className="w-[1920px] h-[1080px] overflow-hidden flex flex-col bg-[#e9ebf0] text-[12px] leading-[18px] text-[#111] font-['Open_Sans','Noto_Sans',sans-serif]">
      <Titlebar />
      <div className="h-[18px] shrink-0 bg-white flex items-center pl-[7px] pt-[2px]">
        {menus.map(([name, w]) => (
          <div key={name} className={`${w} shrink-0 tracking-[-0.35px]`}>{name}</div>
        ))}
      </div>
      <CommandArea />
      <TopToolbar />

      <div className="h-[782px] shrink-0 flex">
        {/* Main tool palette */}
        <div className="w-[64px] shrink-0 pt-[3px] flex flex-col">
          <div className="h-[3px] mx-[3px] border-y border-[#ccd0da]" />
          <div className="grid grid-cols-[28px_28px] pl-px pt-px">
            {sideIcons.map((icon, i) => <ToolIcon key={i} icon={icon} />)}
          </div>
        </div>
        <Viewport />
        <div className="w-[7px] shrink-0" />
        <LayersPanel />
      </div>

      <BottomBars />
      <Taskbar />
    </div>
  );
}
